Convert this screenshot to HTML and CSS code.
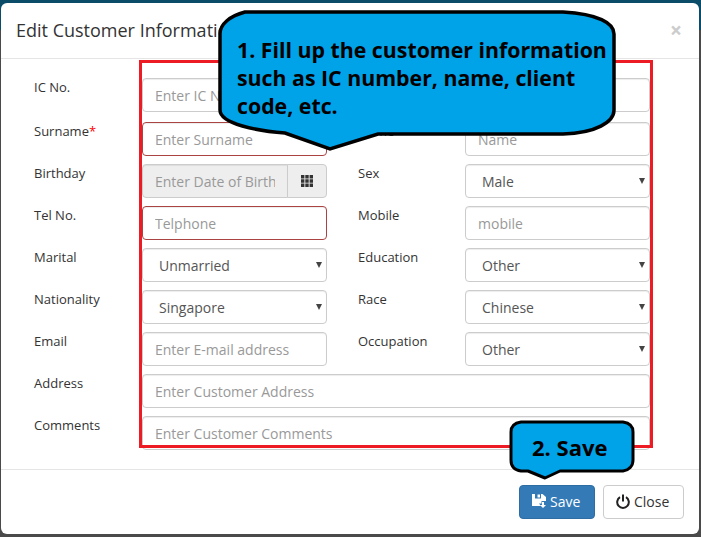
FILE: index.html
```html
<!DOCTYPE html>
<html lang="en">
<head>
  <meta charset="UTF-8" />
  <title>Edit Customer Information</title>
  <link rel="stylesheet" href="styles.css">
</head>
<body>
  <div class="modal">
    <div class="modal-header">
      <h4>Edit Customer Information</h4>
      <span class="dismiss">&times;</span>
    </div>

    <form class="modal-body">
      <label>IC No.</label>
      <input class="field" placeholder="Enter IC No." />
      <label class="col2"></label>
      <input class="field" />

      <label>Surname<span class="req">*</span></label>
      <input class="field invalid" placeholder="Enter Surname" />
      <label class="col2">Name</label>
      <input class="field" placeholder="Name" />

      <label>Birthday</label>
      <div class="input-group">
        <input class="field" placeholder="Enter Date of Birth" disabled />
        <span class="addon">
          <svg width="14" height="14" viewBox="0 0 14 14" fill="#333">
            <path d="M1 1h3.400v3.400H1zM5.300 1h3.400v3.400H5.300zM9.600 1H13v3.400H9.600zM1 5.300h3.400v3.400H1zM5.300 5.300h3.400v3.400H5.300zM9.600 5.300H13v3.400H9.600zM1 9.600h3.400V13H1zM5.300 9.600h3.400V13H5.300zM9.600 9.600H13V13H9.600z"/>
          </svg>
        </span>
      </div>
      <label class="col2">Sex</label>
      <div class="select"><select class="field"><option>Male</option></select></div>

      <label>Tel No.</label>
      <input class="field invalid" placeholder="Telphone" />
      <label class="col2">Mobile</label>
      <input class="field" placeholder="mobile" />

      <label>Marital</label>
      <div class="select"><select class="field"><option>Unmarried</option></select></div>
      <label class="col2">Education</label>
      <div class="select"><select class="field"><option>Other</option></select></div>

      <label>Nationality</label>
      <div class="select"><select class="field"><option>Singapore</option></select></div>
      <label class="col2">Race</label>
      <div class="select"><select class="field"><option>Chinese</option></select></div>

      <label>Email</label>
      <input class="field" placeholder="Enter E-mail address" />
      <label class="col2">Occupation</label>
      <div class="select"><select class="field"><option>Other</option></select></div>

      <label>Address</label>
      <input class="field wide" placeholder="Enter Customer Address" />

      <label>Comments</label>
      <input class="field wide" placeholder="Enter Customer Comments" />
    </form>

    <div class="modal-footer">
      <button type="button" class="btn btn-primary">
        <svg width="14" height="14" viewBox="0 0 14 14" fill="#fff">
          <path d="M0 0h3v4.500h6V0h1.500L14 3v4H9.500v2.500H7l2 2.500H0zM5.500 0.500H8v3H5.500z"/>
          <path d="M10 8h2v3h2l-3 3-3-3h2z"/>
        </svg>
        Save
      </button>
      <button type="button" class="btn btn-default">
        <svg width="14" height="15" viewBox="0 0 14 15" fill="none" stroke="#222" stroke-width="2">
          <path d="M4 3.200A5.800 5.800 0 1 0 10 3.200"/>
          <path d="M7 0.500V7.500"/>
        </svg>
        Close
      </button>
    </div>
  </div>

  <div class="red-box"></div>

  <div class="callout callout-info">
    <svg width="398" height="142" viewBox="0 0 398 142">
      <path d="M27 2H345C380 4 396 13 396 24V100C396 112 378 123 345 124H160L112 139 67 123C40 121 2 114 2 100V24C2 14 12 6 27 2Z" fill="#00a2e8" stroke="#000" stroke-width="3.500"/>
    </svg>
    <p>1. Fill up the customer information<br>such as IC number, name, client<br>code, etc.</p>
  </div>

  <div class="callout callout-save">
    <svg width="126" height="60" viewBox="0 0 126 60">
      <path d="M12 2H114C121 3 124 7 124 12V40C124 46 120 50 114 51H51L36 58 19 51H12C5 50 2 46 2 40V12C2 7 5 3 12 2Z" fill="#00a2e8" stroke="#000" stroke-width="3" stroke-linejoin="round"/>
    </svg>
    <p>2. Save</p>
  </div>
</body>
</html>
```

FILE: styles.css
```css
html, body {
  height: 100%;
}

body {
  margin: 0;
  overflow: hidden;
  font-family: "Open Sans", sans-serif;
  font-size: 13px;
  color: #333;
  background: linear-gradient(#0b4d68 0, #0b4d68 30px, #4a4a4a 30px);
}

.modal {
  box-sizing: border-box;
  width: 698px;
  height: 531px;
  margin: 3px 0 0 1px;
  background: #fff;
  border-radius: 6px;
  display: flex;
  flex-direction: column;
}

.modal-header {
  box-sizing: border-box;
  height: 56px;
  padding: 0 15px 2px;
  border-bottom: 1px solid #e5e5e5;
  display: flex;
  align-items: center;
  justify-content: space-between;
}

.modal-header h4 {
  margin: 0;
  font-size: 18px;
  font-weight: 400;
}

.dismiss {
  font-size: 21px;
  font-weight: 700;
  color: #ccc;
  margin-right: 2px;
}

.modal-body {
  height: 410px;
  box-sizing: border-box;
  padding: 19px 0 0 33px;
  display: grid;
  grid-template-columns: 108px 185px 138px 185px;
  grid-template-rows: 36px repeat(8, 34px);
  row-gap: 8px;
}

.modal-body label.col2 {
  padding-left: 31px;
}

.req {
  color: #f00;
}

.field {
  box-sizing: border-box;
  width: 100%;
  height: 34px;
  padding: 6px 12px;
  border: 1px solid #ccc;
  border-radius: 4px;
  background: #fff;
  font-family: inherit;
  font-size: 14px;
  color: #555;
  box-shadow: inset 0 1px 1px rgba(0, 0, 0, .075);
}

.field::placeholder {
  color: #999;
  opacity: 1;
}

.field.invalid {
  border-color: #a94442;
}

.field.wide {
  grid-column: 2 / 5;
}

.input-group {
  display: flex;
}

.input-group .field {
  flex: 1;
  min-width: 0;
  border-radius: 4px 0 0 4px;
  background: #eee;
}

.addon {
  box-sizing: border-box;
  width: 40px;
  height: 34px;
  margin-left: -1px;
  background: #eee;
  border: 1px solid #ccc;
  border-radius: 0 4px 4px 0;
  display: flex;
  align-items: center;
  justify-content: center;
}

.select {
  position: relative;
}

.select select {
  appearance: none;
  padding-left: 16px;
}

/* arrow of the select */
.select::after {
  content: "";
  position: absolute;
  top: 14px;
  right: 5px;
  border-left: 3.500px solid transparent;
  border-right: 3.500px solid transparent;
  border-top: 6px solid #444;
}

.modal-footer {
  flex: 1;
  border-top: 1px solid #e5e5e5;
  padding: 15px;
  display: flex;
  justify-content: flex-end;
  gap: 8px;
}

.btn {
  box-sizing: border-box;
  height: 34px;
  padding: 0 12px 2px;
  border: 1px solid #ccc;
  border-radius: 4px;
  font-family: inherit;
  font-size: 14px;
  display: flex;
  align-items: center;
  gap: 4px;
}

.btn-primary {
  width: 76px;
  background: #337ab7;
  border-color: #2e6da4;
  color: #fff;
}

.btn-default {
  width: 81px;
  background: #fff;
  color: #333;
}

/* annotations drawn on top of the screenshot */
.red-box {
  position: absolute;
  left: 139px;
  top: 60px;
  width: 508px;
  height: 382px;
  border: 3px solid #ed1c24;
}

.callout {
  position: absolute;
  color: #000;
  font-weight: 700;
}

.callout svg {
  display: block;
}

.callout p {
  position: absolute;
  margin: 0;
  white-space: nowrap;
}

.callout-info {
  left: 218px;
  top: 10px;
  font-size: 21.300px;
  line-height: 28px;
}

.callout-info p {
  left: 19px;
  top: 26px;
}

.callout-save {
  left: 509px;
  top: 420px;
  font-size: 22px;
  line-height: 28px;
}

.callout-save p {
  left: 23px;
  top: 13px;
}
```
